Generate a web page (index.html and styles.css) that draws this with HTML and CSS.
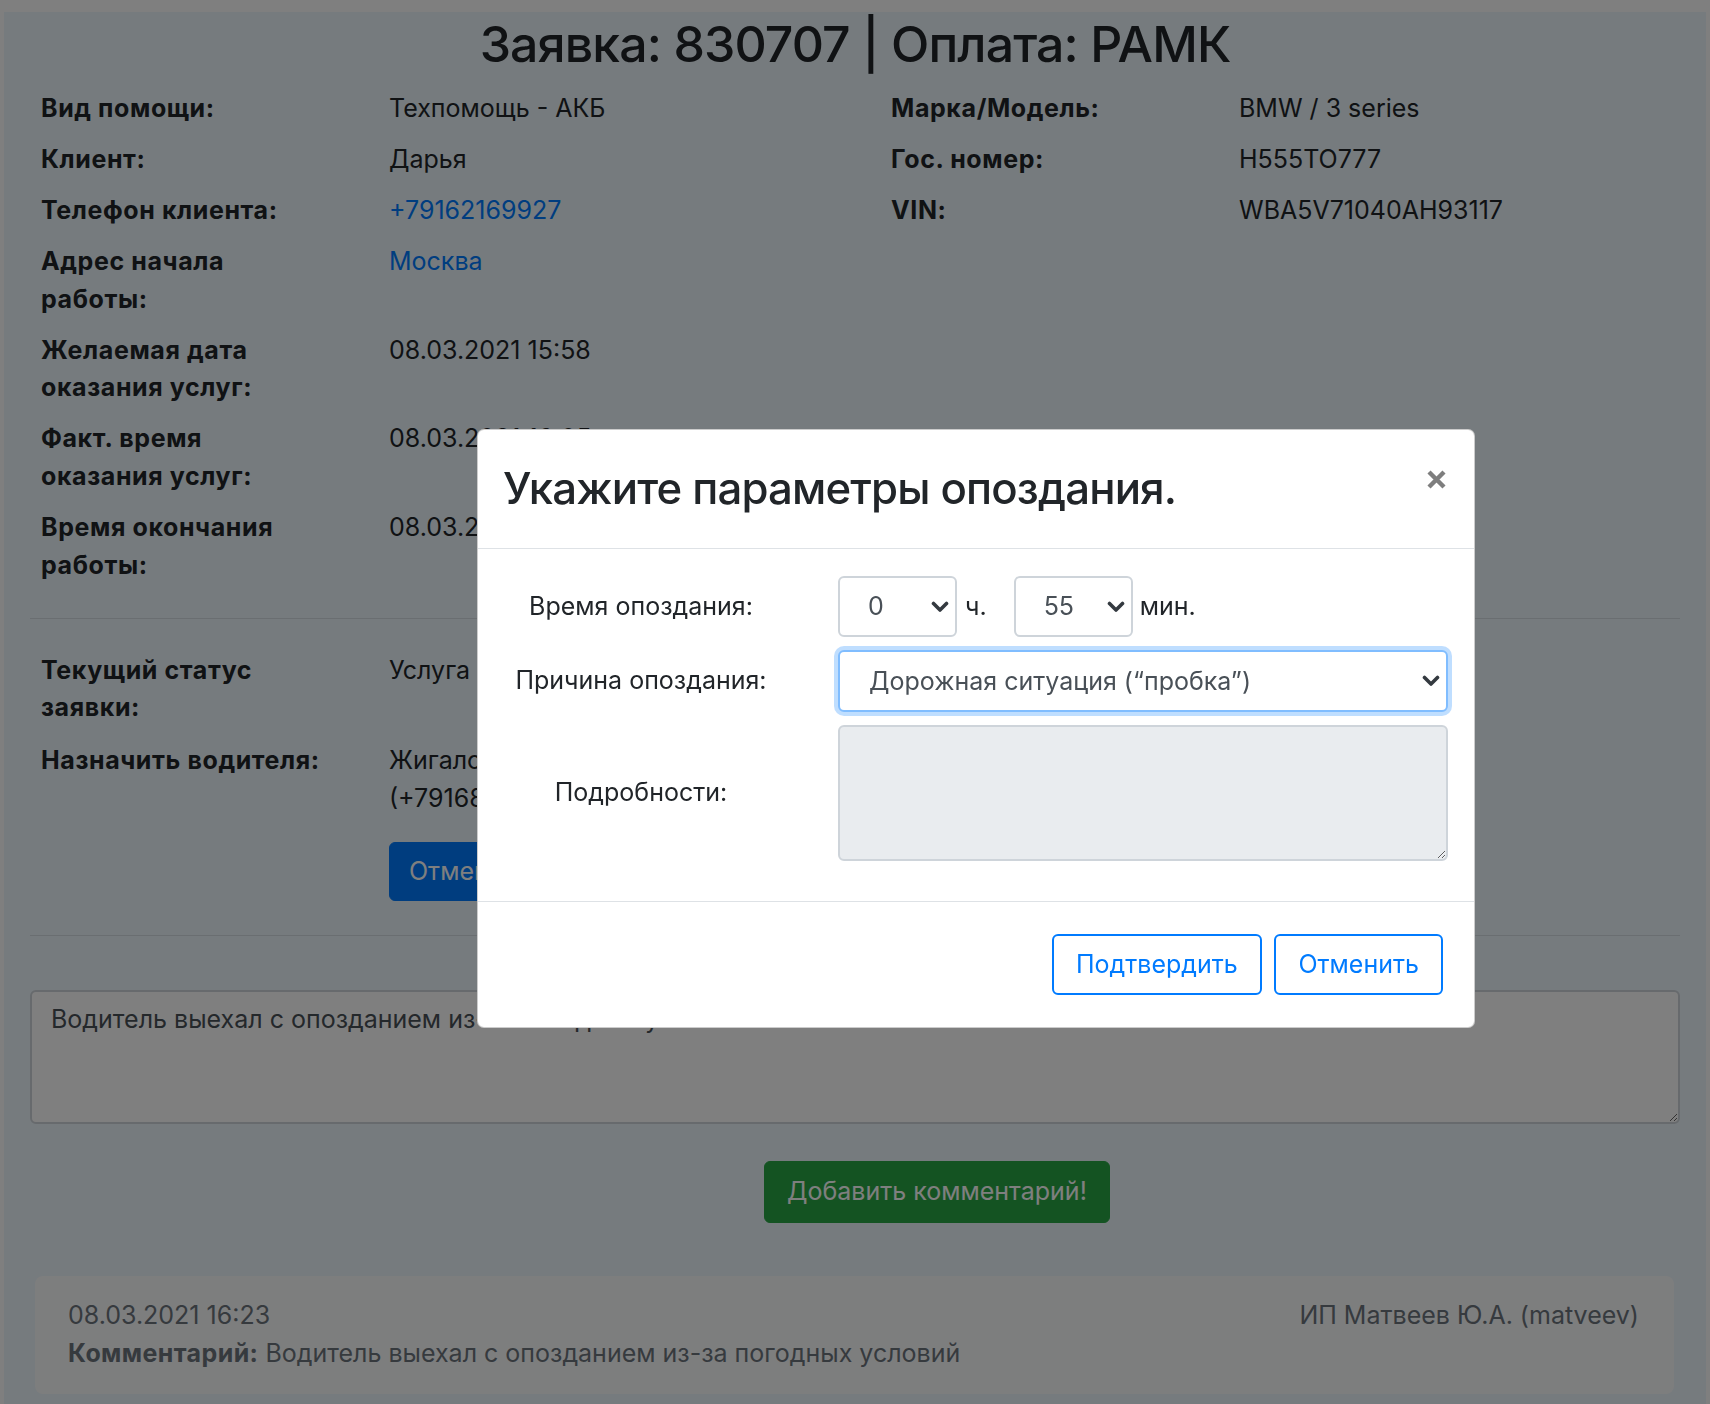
FILE: index.html
```html
<!DOCTYPE html>
<html lang="ru">
<head>
<meta charset="utf-8">
<title>Заявка 830707</title>
<link rel="stylesheet" href="styles.css">
</head>
<body>
<div class="page">
  <h1 class="title">Заявка: 830707 | Оплата: РАМК</h1>
  <div class="info">
    <div class="half">
      <div class="row"><div class="lbl">Вид помощи:</div><div class="val">Техпомощь - АКБ</div></div>
      <div class="row"><div class="lbl">Клиент:</div><div class="val">Дарья</div></div>
      <div class="row"><div class="lbl">Телефон клиента:</div><div class="val"><a href="#">+79162169927</a></div></div>
      <div class="row"><div class="lbl">Адрес начала работы:</div><div class="val"><a href="#">Москва</a></div></div>
      <div class="row"><div class="lbl">Желаемая дата оказания услуг:</div><div class="val">08.03.2021 15:58</div></div>
      <div class="row"><div class="lbl">Факт. время оказания услуг:</div><div class="val">08.03.2021 16:05</div></div>
      <div class="row"><div class="lbl">Время окончания работы:</div><div class="val">08.03.2021 16:23</div></div>
    </div>
    <div class="half">
      <div class="row"><div class="lbl">Марка/Модель:</div><div class="val">BMW / 3 series</div></div>
      <div class="row"><div class="lbl">Гос. номер:</div><div class="val">Н555ТО777</div></div>
      <div class="row"><div class="lbl">VIN:</div><div class="val">WBA5V71040AH93117</div></div>
    </div>
  </div>
  <hr class="sep sep-1">
  <div class="info info-status">
    <div class="half">
      <div class="row"><div class="lbl">Текущий статус заявки:</div><div class="val">Услуга оказана</div></div>
      <div class="row"><div class="lbl">Назначить водителя:</div><div class="val">Жигалов Андрей Викторович (+79168453312)<div><button class="btn btn-primary">Отменить назначение</button></div></div></div>
    </div>
  </div>
  <hr class="sep sep-2">
  <textarea class="comment">Водитель выехал с опозданием из-за погодных условий</textarea>
  <div class="actions"><button class="btn btn-success">Добавить комментарий!</button></div>
  <div class="card">
    <div class="card-top"><span>08.03.2021 16:23</span><span>ИП Матвеев Ю.А. (matveev)</span></div>
    <div><b>Комментарий:</b> Водитель выехал с опозданием из-за погодных условий</div>
  </div>
</div>

<div class="backdrop"></div>
<div class="modal">
  <div class="modal-header">
    <h3 class="modal-title">Укажите параметры опоздания.</h3>
    <button class="close" aria-label="Закрыть">
      <svg width="21" height="21" viewBox="0 0 21 21"><path d="M3 3 L18 18 M18 3 L3 18" stroke="#000" stroke-width="4.4" stroke-linecap="butt" fill="none"/></svg>
    </button>
  </div>
  <div class="modal-body">
    <div class="frow">
      <label class="flabel">Время опоздания:</label>
      <div class="time">
        <span class="sel sel-sm"><select><option>0</option></select><svg class="chev" width="18" height="12" viewBox="0 0 18 12"><path d="M2.5 2.5 L9 9 L15.5 2.5" stroke="#343a40" stroke-width="3.6" fill="none" stroke-linecap="round" stroke-linejoin="round"/></svg></span>
        <span class="unit unit-h">ч.</span>
        <span class="sel sel-sm"><select><option>55</option></select><svg class="chev" width="18" height="12" viewBox="0 0 18 12"><path d="M2.5 2.5 L9 9 L15.5 2.5" stroke="#343a40" stroke-width="3.6" fill="none" stroke-linecap="round" stroke-linejoin="round"/></svg></span>
        <span class="unit unit-m">мин.</span>
      </div>
    </div>
    <div class="frow">
      <label class="flabel">Причина опоздания:</label>
      <span class="sel sel-focus"><select><option>Дорожная ситуация (“пробка”)</option></select><svg class="chev" width="18" height="12" viewBox="0 0 18 12"><path d="M2.5 2.5 L9 9 L15.5 2.5" stroke="#343a40" stroke-width="3.6" fill="none" stroke-linecap="round" stroke-linejoin="round"/></svg></span>
    </div>
    <div class="frow">
      <label class="flabel">Подробности:</label>
      <textarea class="details" readonly></textarea>
    </div>
  </div>
  <div class="modal-footer">
    <button class="btn btn-outline">Подтвердить</button>
    <button class="btn btn-outline">Отменить</button>
  </div>
</div>
</body>
</html>
```

FILE: styles.css
```css
* { box-sizing: border-box; }
html { overflow: hidden; }
html, body { margin: 0; }
body {
  background: #fff;
  font-family: Inter, "Noto Sans", "Liberation Sans", sans-serif;
  color: #212529;
  font-size: 25px;
  line-height: 1.5;
}
.page {
  margin: 12px 4px 0;
  min-height: 1392px;
  background: #ecf6fc;
  padding: 2px 26px 10px;
}
.title {
  margin: 0 0 16px;
  font-size: 50px;
  font-weight: 500;
  line-height: 60px;
  letter-spacing: -0.9px;
  text-align: center;
}
.info { display: flex; padding-left: 11px; }
.half { flex: 0 0 850px; }
.half + .half { flex: 1 1 auto; }
.row {
  display: grid;
  grid-template-columns: 286px 1fr;
  column-gap: 62px;
  margin-bottom: 13.6px;
}
.info-status .row { margin-bottom: 15.5px; }
.lbl { font-weight: 700; letter-spacing: 0.6px; }
a { color: #007bff; text-decoration: none; }
.sep {
  border: 0;
  border-top: 1px solid rgba(0,0,0,.1);
  margin: 20px 0 33px;
}
.sep-2 { margin: 18px 0 54px; }
.btn {
  font-family: inherit;
  font-size: 25px;
  line-height: 1.5;
  border-radius: 6px;
  cursor: pointer;
}
.btn-primary {
  margin-top: 25px;
  height: 59px;
  padding: 0 19px;
  background: #007bff;
  border: 1px solid #007bff;
  color: #fff;
}
.comment {
  display: block;
  width: 100%;
  height: 134px;
  margin: 0;
  padding: 9px 19px;
  font-family: inherit;
  font-size: 25px;
  line-height: 1.5;
  color: #495057;
  background: #fff;
  border: 2px solid #ced4da;
  border-radius: 6px;
}
.actions { margin-top: 37px; padding-left: 734px; }
.btn-success {
  height: 62px;
  padding: 0 22px;
  background: #28a745;
  border: 1px solid #28a745;
  color: #fff;
}
.card {
  margin: 53px 6px 0 5px;
  padding: 20px 35px 22px 33px;
  line-height: 38px;
  background: #fbfcfd;
  border-radius: 8px;
  color: #6c757d;
}
.card b { letter-spacing: 0.4px; }
.card-top { display: flex; justify-content: space-between; }

.backdrop {
  position: fixed;
  inset: 0;
  background: rgba(0,0,0,.5);
}
.modal {
  position: fixed;
  left: 477px;
  top: 429px;
  width: 998px;
  background: #fff;
  border: 1px solid rgba(0,0,0,.2);
  border-radius: 7px;
}
.modal-header {
  display: flex;
  justify-content: space-between;
  align-items: flex-start;
  padding: 31px 27px 31px 25px;
  border-bottom: 1px solid #dee2e6;
}
.modal-title {
  margin: 0;
  font-size: 43.75px;
  font-weight: 500;
  line-height: 56px;
  letter-spacing: -0.85px;
}
.close {
  margin-top: 8px;
  width: 21px;
  height: 21px;
  padding: 0;
  border: 0;
  background: none;
  opacity: .5;
  display: flex;
}
.modal-body { padding: 27px 26px 27px 31px; }
.frow {
  display: grid;
  grid-template-columns: 264px 1fr;
  column-gap: 65px;
  align-items: center;
  margin-bottom: 13px;
}
.flabel { text-align: center; }
.time { display: flex; align-items: center; }
.sel { position: relative; display: block; }
.sel select {
  display: block;
  width: 100%;
  appearance: none;
  -webkit-appearance: none;
  font-family: inherit;
  font-size: 25px;
  color: #495057;
  background: #fff;
  border: 2px solid #ced4da;
  border-radius: 6px;
  padding: 0 40px 0 28px;
  height: 61px;
  line-height: 57px;
  outline: none;
}
.sel-sm { width: 119px; }
.sel-focus select {
  height: 62px;
  line-height: 58px;
  padding-left: 29px;
  border-color: #80bdff;
  box-shadow: 0 0 0 4px rgba(0,123,255,.25);
}
.chev {
  position: absolute;
  right: 8px;
  top: 50%;
  margin-top: -6px;
  pointer-events: none;
}
.unit-h { margin: 0 27px 0 8px; }
.unit-m { margin-left: 7px; }
.details {
  display: block;
  width: 100%;
  height: 136px;
  margin: 0;
  background: #e9ecef;
  border: 2px solid #ced4da;
  border-radius: 6px;
  font-family: inherit;
  font-size: 25px;
  outline: none;
}
.modal-footer {
  display: flex;
  justify-content: flex-end;
  gap: 12.7px;
  padding: 32px 31px 32px;
  border-top: 1px solid #dee2e6;
}
.btn-outline {
  height: 61px;
  padding: 0 22px;
  background: transparent;
  border: 2px solid #007bff;
  color: #007bff;
}
```
